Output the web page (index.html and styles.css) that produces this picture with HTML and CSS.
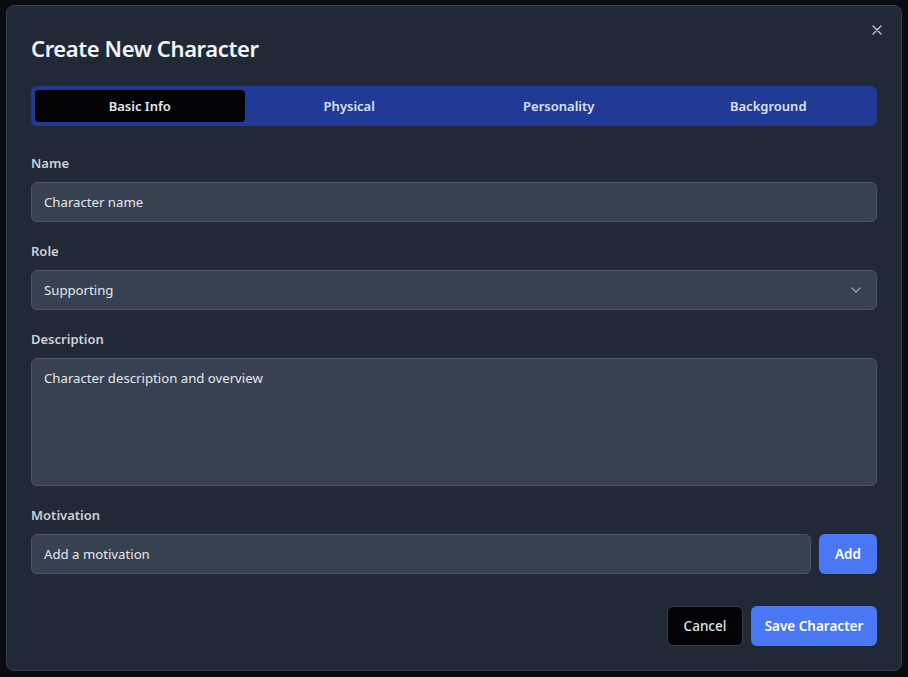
FILE: index.html
```html
<!DOCTYPE html>
<html>
<head>
<meta charset="utf-8">
<link rel="stylesheet" href="styles.css">
</head>
<body>
<div class="modal">
  <button class="close" aria-label="Close">
    <svg width="16" height="16" viewBox="0 0 24 24" fill="none" stroke="currentColor" stroke-width="2" stroke-linecap="round"><path d="M18 6 6 18M6 6l12 12"/></svg>
  </button>
  <h2 class="title">Create New Character</h2>
  <div class="tabs">
    <div class="tab active">Basic Info</div>
    <div class="tab">Physical</div>
    <div class="tab">Personality</div>
    <div class="tab">Background</div>
  </div>
  <div class="form">
    <div class="field">
      <label class="label">Name</label>
      <div class="input">Character name</div>
    </div>
    <div class="field">
      <label class="label">Role</label>
      <div class="input select">
        <span>Supporting</span>
        <svg width="16" height="16" viewBox="0 0 24 24" fill="none" stroke="currentColor" stroke-width="2" stroke-linecap="round" stroke-linejoin="round"><path d="m6 9 6 6 6-6"/></svg>
      </div>
    </div>
    <div class="field">
      <label class="label">Description</label>
      <div class="input textarea">Character description and overview</div>
    </div>
    <div class="field">
      <label class="label">Motivation</label>
      <div class="row">
        <div class="input grow">Add a motivation</div>
        <button class="btn primary small">Add</button>
      </div>
    </div>
  </div>
  <div class="footer">
    <button class="btn outline">Cancel</button>
    <button class="btn primary">Save Character</button>
  </div>
</div>
</body>
</html>
```

FILE: styles.css
```css
* { box-sizing: border-box; }
html, body { margin: 0; height: 100%; }
body {
  background: #0b0c11;
  font-family: "Noto Sans", "Open Sans", sans-serif;
  color: #e5e7eb;
  padding: 5px 6px 6px 6px;
}
.modal {
  position: relative;
  width: 896px;
  height: 666px;
  background: #212936;
  border: 1px solid #374151;
  border-radius: 8px;
  padding: 24px;
  display: flex;
  flex-direction: column;
}
.close {
  position: absolute;
  top: 16px;
  right: 16px;
  background: none;
  border: none;
  padding: 0;
  color: #c5cad3;
  width: 16px;
  height: 16px;
  display: flex;
}
.title {
  margin: 0;
  font-size: 22px;
  line-height: 36px;
  font-weight: 600;
  color: #f3f4f6;
  letter-spacing: -0.4px;
}
.tabs {
  margin-top: 20px;
  height: 40px;
  background: #203a95;
  border-radius: 6px;
  padding: 4px;
  display: grid;
  grid-template-columns: repeat(4, 1fr);
}
.tab {
  display: flex;
  align-items: center;
  justify-content: center;
  font-size: 13px;
  font-weight: 600;
  color: #dde3f3;
  border-radius: 4px;
}
.tab.active {
  background: #030306;
  color: #e6e8ef;
}
.form {
  margin-top: 27px;
  display: flex;
  flex-direction: column;
  gap: 19px;
}
.field {
  display: flex;
  flex-direction: column;
  gap: 9px;
}
.label {
  font-size: 13px;
  line-height: 20px;
  font-weight: 600;
  color: #cdd1d8;
}
.input {
  height: 40px;
  background: #374151;
  border: 1px solid #4b5563;
  border-radius: 6px;
  padding: 0 12px;
  display: flex;
  align-items: center;
  font-size: 13.2px;
  color: #e5e7eb;
}
.select {
  justify-content: space-between;
}
.select svg { color: #9ca3af; }
.textarea {
  height: 128px;
  align-items: flex-start;
  padding-top: 9px;
  line-height: 20px;
}
.row {
  display: flex;
  gap: 8px;
}
.grow { flex: 1; }
.btn {
  font-family: inherit;
  height: 40px;
  border-radius: 6px;
  font-size: 13.5px;
  font-weight: 600;
  padding: 0 16px;
  border: 1px solid transparent;
}
.primary {
  background: #4a78f4;
  color: #ffffff;
}
.small { width: 58px; padding: 0; }
.outline {
  background: #030306;
  border-color: #3a404b;
  color: #dfe3ea;
  font-weight: 500;
}
.footer {
  margin-top: auto;
  display: flex;
  justify-content: flex-end;
  gap: 8px;
}
.footer .outline { width: 76px; padding: 0; }
.footer .primary { width: 126px; padding: 0; }
```
